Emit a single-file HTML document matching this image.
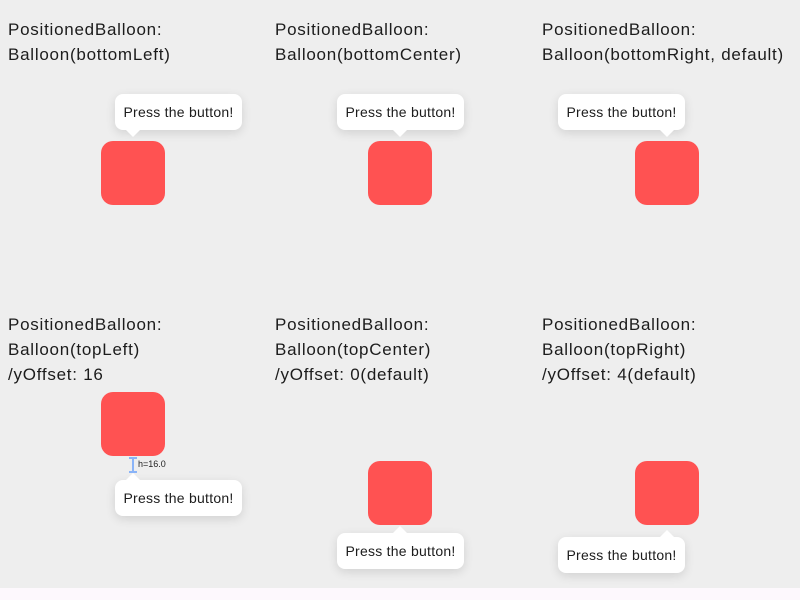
<!DOCTYPE html>
<html><head><style>
body{margin:0;width:800px;height:600px;background:#eeeeee;position:relative;overflow:hidden;font-family:"Liberation Sans",sans-serif}
.t{position:absolute;font-size:17px;line-height:25px;color:#1c1c1c;letter-spacing:0.75px}
.box{position:absolute;width:64px;height:64px;background:#ff5252;border-radius:12px}
.b{position:absolute;width:127px;height:36px;background:#fff;border-radius:8px;box-shadow:0 3px 10px rgba(0,0,0,0.12);font-size:14px;line-height:36px;text-align:center;color:#1c1c1c;letter-spacing:0.25px}
.ad{position:absolute;width:0;height:0;border-left:7px solid transparent;border-right:7px solid transparent;border-top:7px solid #fff}
.au{position:absolute;width:0;height:0;border-left:7px solid transparent;border-right:7px solid transparent;border-bottom:7px solid #fff}
</style></head><body>
<div class="t" style="left:8px;top:17px">PositionedBalloon:<br>Balloon(bottomLeft)</div>
<div class="t" style="left:275px;top:17px">PositionedBalloon:<br>Balloon(bottomCenter)</div>
<div class="t" style="left:542px;top:17px">PositionedBalloon:<br>Balloon(bottomRight, default)</div>
<div class="t" style="left:8px;top:312px">PositionedBalloon:<br>Balloon(topLeft)<br>/yOffset: 16</div>
<div class="t" style="left:275px;top:312px">PositionedBalloon:<br>Balloon(topCenter)<br>/yOffset: 0(default)</div>
<div class="t" style="left:542px;top:312px">PositionedBalloon:<br>Balloon(topRight)<br>/yOffset: 4(default)</div>

<div class="box" style="left:101px;top:141px"></div>
<div class="box" style="left:368px;top:141px"></div>
<div class="box" style="left:635px;top:141px"></div>
<div class="box" style="left:101px;top:392px"></div>
<div class="box" style="left:368px;top:461px"></div>
<div class="box" style="left:635px;top:461px"></div>

<div class="b" style="left:115px;top:94px">Press the button!</div><div class="ad" style="left:126px;top:130px"></div>
<div class="b" style="left:337px;top:94px">Press the button!</div><div class="ad" style="left:393px;top:130px"></div>
<div class="b" style="left:558px;top:94px">Press the button!</div><div class="ad" style="left:660px;top:130px"></div>

<div class="b" style="left:115px;top:480px">Press the button!</div><div class="au" style="left:126px;top:473px"></div>
<div class="b" style="left:337px;top:533px">Press the button!</div><div class="au" style="left:393px;top:526px"></div>
<div class="b" style="left:558px;top:537px">Press the button!</div><div class="au" style="left:660px;top:530px"></div>

<div style="position:absolute;left:132px;top:457px;width:2px;height:15px;background:#8ab4f8"></div>
<div style="position:absolute;left:129px;top:457px;width:8px;height:2px;background:#8ab4f8"></div>
<div style="position:absolute;left:129px;top:471px;width:8px;height:2px;background:#8ab4f8"></div>
<div style="position:absolute;left:138px;top:459px;font-size:9px;color:#222">h=16.0</div>

<div style="position:absolute;left:0;top:588px;width:800px;height:12px;background:#fdf8fd"></div>
</body></html>
